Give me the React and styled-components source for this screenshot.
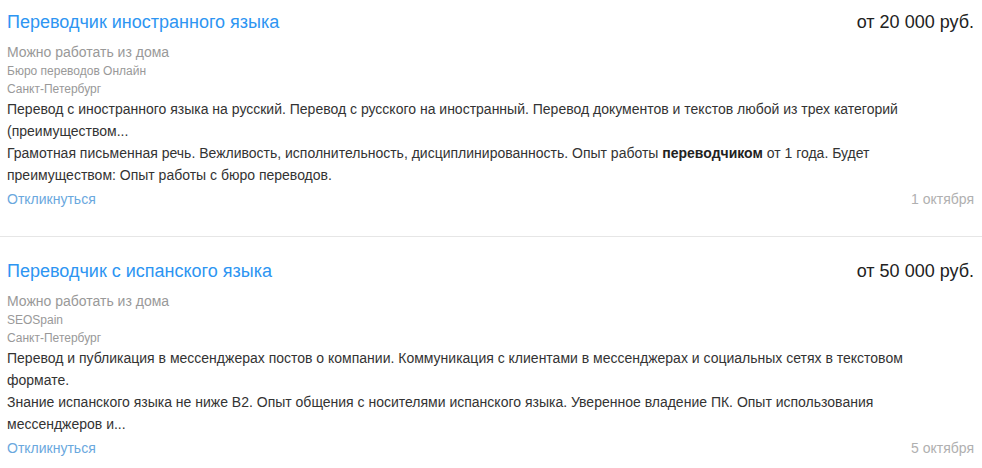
import React from 'react';
import styled, { createGlobalStyle } from 'styled-components';

const GlobalStyle = createGlobalStyle`
  body {
    margin: 0;
    background: #fff;
    font-family: "Liberation Sans", Arial, sans-serif;
  }
`;

const vacancies = [
  {
    id: 1,
    title: 'Переводчик иностранного языка',
    salary: 'от 20 000 руб.',
    remote: 'Можно работать из дома',
    company: 'Бюро переводов Онлайн',
    city: 'Санкт-Петербург',
    duties: 'Перевод с иностранного языка на русский. Перевод с русского на иностранный. Перевод документов и текстов любой из трех категорий (преимуществом...',
    requirements: (
      <>
        Грамотная письменная речь. Вежливость, исполнительность, дисциплинированность. Опыт работы <b>переводчиком</b> от 1 года. Будет преимуществом: Опыт работы с бюро переводов.
      </>
    ),
    date: '1 октября'
  },
  {
    id: 2,
    title: 'Переводчик с испанского языка',
    salary: 'от 50 000 руб.',
    remote: 'Можно работать из дома',
    company: 'SEOSpain',
    city: 'Санкт-Петербург',
    duties: 'Перевод и публикация в мессенджерах постов о компании. Коммуникация с клиентами в мессенджерах и социальных сетях в текстовом формате.',
    requirements: 'Знание испанского языка не ниже В2. Опыт общения с носителями испанского языка. Уверенное владение ПК. Опыт использования мессенджеров и...',
    date: '5 октября'
  }
];

const App = () => {
  return (
    <>
      <GlobalStyle />
      <List>
        {vacancies.map((v, i) => (
          <Card key={v.id} last={i === vacancies.length - 1}>
            <Header>
              <Title href="#">{v.title}</Title>
              <Salary>{v.salary}</Salary>
            </Header>
            <Remote>{v.remote}</Remote>
            <Meta>{v.company}</Meta>
            <Meta>{v.city}</Meta>
            <Description>
              <div>{v.duties}</div>
              <div>{v.requirements}</div>
            </Description>
            <Footer>
              <Respond href="#">Откликнуться</Respond>
              <DateLabel>{v.date}</DateLabel>
            </Footer>
          </Card>
        ))}
      </List>
    </>
  );
};

const List = styled.div``;

const Card = styled.div`
  padding: 10px 8px ${props => (props.last ? '10px' : '27px')} 7px;
  border-bottom: ${props => (props.last ? 'none' : '1px solid #e6e6e6')};
  & + & {
    padding-top: 22px;
  }
`;

const Header = styled.div`
  display: flex;
  justify-content: space-between;
  align-items: center;
  line-height: 24px;
`;

const Title = styled.a`
  font-size: 18px;
  color: #2d95f2;
  text-decoration: none;
`;

const Salary = styled.div`
  font-size: 18px;
  color: #222;
`;

const Remote = styled.div`
  margin-top: 8px;
  font-size: 14px;
  line-height: 20px;
  color: #999;
`;

const Meta = styled.div`
  font-size: 12px;
  line-height: 18px;
  color: #999;
`;

const Description = styled.div`
  padding-right: 24px;
  font-size: 14px;
  line-height: 22px;
  color: #333;
  b {
    font-weight: bold;
    color: #222;
  }
`;

const Footer = styled.div`
  display: flex;
  justify-content: space-between;
  align-items: center;
  margin-top: 3px;
  font-size: 14px;
  line-height: 20px;
`;

const Respond = styled.a`
  color: #6aa8de;
  text-decoration: none;
`;

const DateLabel = styled.span`
  color: #b0b0b0;
`;

export default App;
